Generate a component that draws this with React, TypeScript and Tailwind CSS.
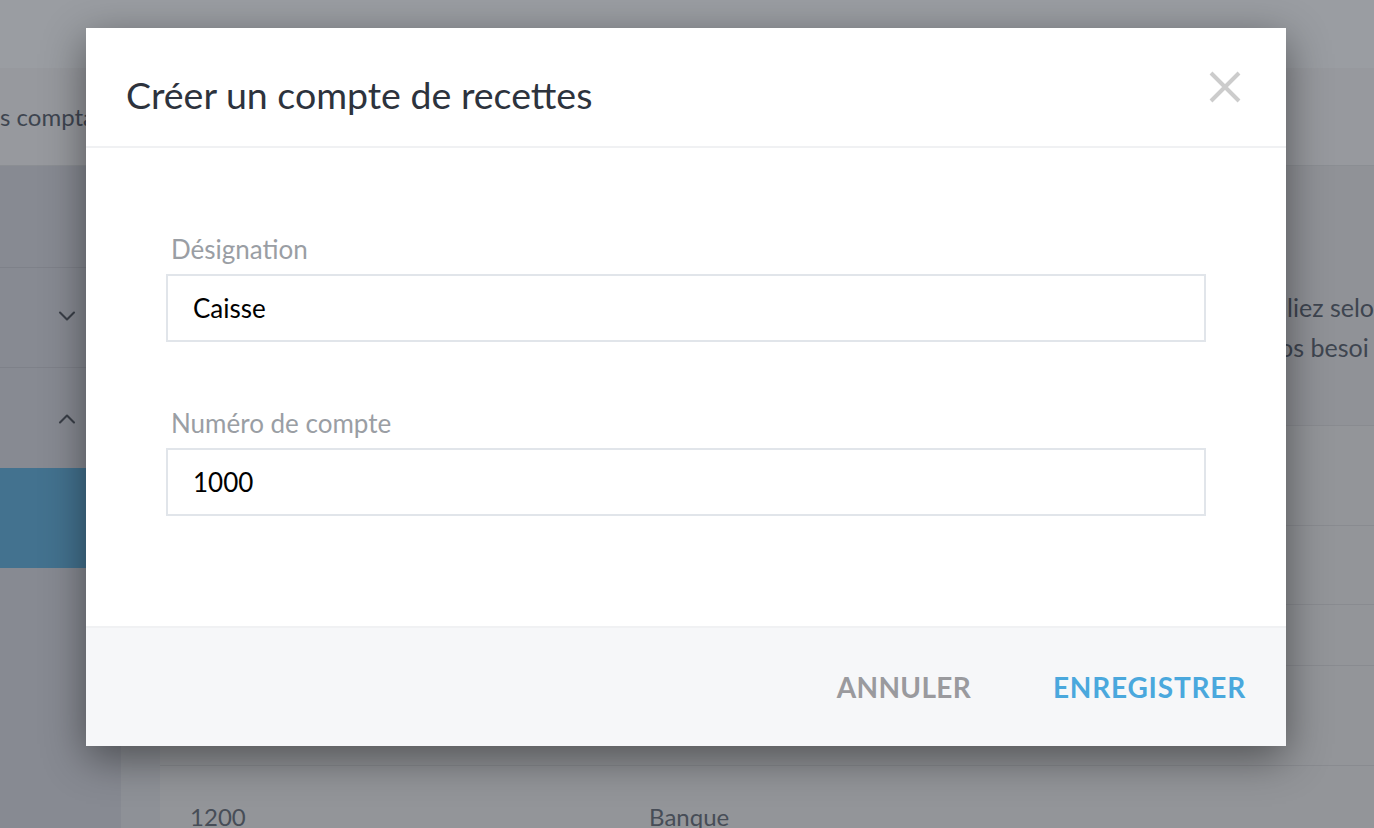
import { ChevronDown, ChevronUp } from "lucide-react";

const Field = ({ label, value }: { label: string; value: string }) => (
  <div className="flex flex-col">
    <label className="pl-[5px] text-[26px] leading-[30px] text-[#9a9ea4]">{label}</label>
    <div className="mt-[10px] h-[68px] border-2 border-[#e1e5ea] flex items-center px-[25px] text-[26px] text-black">
      {value}
    </div>
  </div>
);

const App = () => {
  return (
    <div className="relative w-[1374px] h-[828px] overflow-hidden bg-[#939599] font-['Lato',sans-serif]">
      {/* dimmed page behind */}
      <div className="h-[68px] bg-[#9a9da2]" />
      <div className="h-[98px] bg-[#97999e] border-b border-[#8b8e93] flex items-center">
        <span className="text-[24px] text-[#3e4550]">s comptables</span>
      </div>
      <div className="flex h-[662px]">
        <div className="w-[122px] bg-[#878a92] flex flex-col">
          <div className="h-[102px] border-b border-[#7e8189]" />
          <div className="h-[100px] border-b border-[#7e8189] flex items-center justify-end pr-[40px]">
            <ChevronDown className="text-[#3a3f48] -mt-[4px]" size={28} strokeWidth={1.8} />
          </div>
          <div className="h-[100px] flex items-center justify-end pr-[40px]">
            <ChevronUp className="text-[#3a3f48] mt-[2px]" size={28} strokeWidth={1.8} />
          </div>
          <div className="h-[100px] bg-[#43728f]" />
        </div>
        <div className="w-[40px] bg-[#8e9197]" />
        <div className="flex-1 flex flex-col">
          <div className="h-[260px] bg-[#909297] border-b border-[#898b90] flex items-center pl-[1127px]">
            <div className="text-[25px] leading-[40px] text-[#3e4550] whitespace-nowrap mt-[62px]">
              <div>liez selo</div>
              <div className="-ml-[8px]">os besoi</div>
            </div>
          </div>
          <div className="h-[100px] border-b border-[#898b90]" />
          <div className="h-[79px] border-b border-[#898b90]" />
          <div className="h-[61px] border-b border-[#898b90]" />
          <div className="h-[100px] border-b border-[#898b90]" />
          <div className="flex items-start pt-[33px] h-[60px] text-[24px] text-[#474d57]">
            <span className="ml-[30px] w-[459px]">1200</span>
            <span>Banque</span>
          </div>
        </div>
      </div>

      {/* modal */}
      <div className="absolute left-[86px] top-[28px] w-[1200px] h-[718px] bg-white flex flex-col shadow-[0_12px_40px_rgba(0,0,0,0.45)]">
        <div className="h-[120px] border-b-2 border-[#f0f1f3] flex items-center justify-between pl-[40px] pr-[44px] shrink-0">
          <h2 className="text-[37.5px] text-[#2d333d] mt-[16px]">Créer un compte de recettes</h2>
          <button className="w-[34px] h-[34px] flex items-center justify-center">
            <svg width="32" height="32" viewBox="0 0 32 32">
              <path d="M2 2 L30 30 M30 2 L2 30" stroke="#cccccc" strokeWidth="4" />
            </svg>
          </button>
        </div>
        <div className="flex-1 px-[80px] pt-[86px] flex flex-col gap-[66px]">
          <Field label="Désignation" value="Caisse" />
          <Field label="Numéro de compte" value="1000" />
        </div>
        <div className="h-[120px] bg-[#f6f7f9] border-t-2 border-[#f0f1f3] flex items-center justify-end pr-[40px] gap-[82px] shrink-0">
          <button className="text-[28px] font-bold text-[#9a9a9e] tracking-[0.3px]">ANNULER</button>
          <button className="text-[28px] font-bold text-[#4aa8dd] tracking-[0.8px]">ENREGISTRER</button>
        </div>
      </div>
    </div>
  );
};

export default App;
